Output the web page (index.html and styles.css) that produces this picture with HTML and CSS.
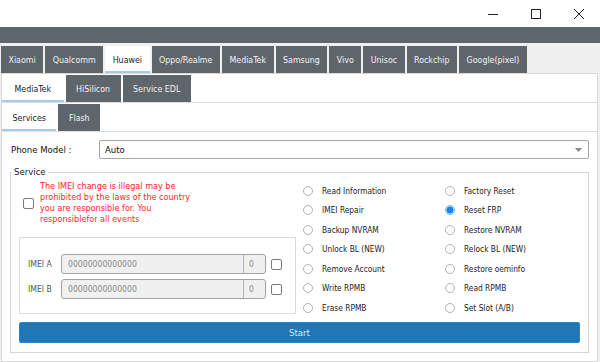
FILE: index.html
```html
<!DOCTYPE html>
<html>
<head>
<meta charset="utf-8">
<link rel="stylesheet" href="styles.css">
</head>
<body>
<div class="window">
  <header class="titlebar">
    <span class="ctl"><svg width="12" height="12" viewBox="0 0 12 12"><path d="M1 6.5H11" stroke="#222" stroke-width="1"/></svg></span>
    <span class="ctl"><svg width="12" height="12" viewBox="0 0 12 12"><rect x="1.5" y="1.5" width="9" height="9" fill="none" stroke="#222" stroke-width="1"/></svg></span>
    <span class="ctl"><svg width="12" height="12" viewBox="0 0 12 12"><path d="M1 1L11 11M11 1L1 11" stroke="#222" stroke-width="1"/></svg></span>
  </header>
  <div class="darkbar"></div>
  <div class="app">
    <nav class="tabs tabs-top">
      <span class="tab">Xiaomi</span>
      <span class="tab">Qualcomm</span>
      <span class="tab active">Huawei</span>
      <span class="tab">Oppo/Realme</span>
      <span class="tab">MediaTek</span>
      <span class="tab">Samsung</span>
      <span class="tab">Vivo</span>
      <span class="tab">Unisoc</span>
      <span class="tab">Rockchip</span>
      <span class="tab">Google(pixel)</span>
    </nav>
    <div class="panel">
      <nav class="tabs tabs-sub">
        <span class="tab active wide">MediaTek</span>
        <span class="tab">HiSilicon</span>
        <span class="tab">Service EDL</span>
      </nav>
      <nav class="tabs tabs-sub">
        <span class="tab active">Services</span>
        <span class="tab">Flash</span>
      </nav>
      <div class="content">
        <div class="model-row">
          <span class="model-label">Phone Model :</span>
          <div class="select">
            <span>Auto</span>
            <svg width="7" height="4" viewBox="0 0 7 4"><path d="M0 0H7L3.5 4Z" fill="#888"/></svg>
          </div>
        </div>
        <fieldset class="group">
          <legend>Service</legend>
          <div class="group-body">
            <div class="left">
              <div class="warning">
                <span class="check"></span>
                <p>The IMEI change is illegal may be<br>prohibited by the laws of the country<br>you are responsible for. You<br>responsiblefor all events</p>
              </div>
              <div class="imei-box">
                <div class="imei-row">
                  <span class="imei-label">IMEI A</span>
                  <div class="imei-input"><span class="num">00000000000000</span><span class="cnt">0</span></div>
                  <span class="check"></span>
                </div>
                <div class="imei-row">
                  <span class="imei-label">IMEI B</span>
                  <div class="imei-input"><span class="num">00000000000000</span><span class="cnt">0</span></div>
                  <span class="check"></span>
                </div>
              </div>
            </div>
            <div class="options">
              <label class="opt"><span class="radio"></span>Read Information</label>
              <label class="opt"><span class="radio"></span>Factory Reset</label>
              <label class="opt"><span class="radio"></span>IMEI Repair</label>
              <label class="opt"><span class="radio on"></span>Reset FRP</label>
              <label class="opt"><span class="radio"></span>Backup NVRAM</label>
              <label class="opt"><span class="radio"></span>Restore NVRAM</label>
              <label class="opt"><span class="radio"></span>Unlock BL (NEW)</label>
              <label class="opt"><span class="radio"></span>Relock BL (NEW)</label>
              <label class="opt"><span class="radio"></span>Remove Account</label>
              <label class="opt"><span class="radio"></span>Restore oeminfo</label>
              <label class="opt"><span class="radio"></span>Write RPMB</label>
              <label class="opt"><span class="radio"></span>Read RPMB</label>
              <label class="opt"><span class="radio"></span>Erase RPMB</label>
              <label class="opt"><span class="radio"></span>Set Slot (A/B)</label>
            </div>
          </div>
          <button class="start">Start</button>
        </fieldset>
      </div>
    </div>
  </div>
</div>
</body>
</html>
```
FILE: styles.css
```css
* { box-sizing: border-box; }
html, body { margin: 0; padding: 0; }
body {
  width: 600px;
  height: 362px;
  overflow: hidden;
  background: #f0f0f0;
  font-family: "DejaVu Sans Condensed", "DejaVu Sans", sans-serif;
  font-stretch: condensed;
  font-size: 9px;
  color: #222;
}
.titlebar {
  height: 27px;
  background: #fff;
  display: flex;
  justify-content: flex-end;
}
.ctl {
  width: 43px;
  display: flex;
  align-items: center;
  justify-content: center;
}
.darkbar { height: 16px; background: #5e666c; }
.app {
  height: 319px;
  padding: 3px 2px 0 1px;
  background: #f0f0f0;
  display: flex;
  flex-direction: column;
}
.tabs { display: flex; gap: 2px; }
.tabs-top { height: 27px; flex: none; }
.tab {
  display: flex;
  align-items: center;
  padding: 0 7.5px;
  background: #5e666c;
  color: #f4f4f4;
  font-size: 8.8px;
  white-space: nowrap;
}
.tab.active {
  background: #fff;
  color: #1a1a1a;
  box-shadow: inset 0 -2px #a9cbea;
}
.panel {
  flex: 1;
  background: #fff;
  border: 1px solid #d9d9d9;
  display: flex;
  flex-direction: column;
}
.tabs-sub {
  height: 29px;
  padding-top: 1px;
  border-bottom: 1px solid #dedede;
  flex: none;
}
.tabs-sub .tab { padding: 0 10.5px; }
.tabs-sub .tab.wide { padding: 0 12.5px; }
.content { padding: 8px 8px 0 8px; }
.model-row { display: flex; align-items: center; height: 19px; }
.model-label { width: 89px; padding-left: 1px; font-size: 9.5px; color: #111; }
.select {
  flex: 1;
  height: 19px;
  border: 1px solid #a6a6a6;
  border-radius: 2px;
  display: flex;
  align-items: center;
  justify-content: space-between;
  padding: 0 6px 0 5px;
  font-size: 9.5px;
  color: #111;
}
.group {
  margin: 7px 0 0 0;
  padding: 0 0 9px 0;
  border: 1px solid #d5d5d5;
  min-width: 0;
}
.group legend {
  margin-left: 1px;
  padding: 0 2px;
  font-size: 9.5px;
  line-height: 12px;
  color: #222;
}
.group-body {
  display: flex;
  align-items: flex-start;
  padding: 3px 0 0 8px;
}
.left { width: 277px; }
.warning {
  display: flex;
  align-items: center;
  padding-left: 4px;
  gap: 6px;
}
.warning p {
  margin: 0;
  color: #ff2626;
  font-size: 9px;
  line-height: 11px;
}
.check {
  width: 11px;
  height: 11px;
  border: 1px solid #7a7a7a;
  border-radius: 2px;
  background: #fff;
  flex: none;
}
.imei-box {
  margin-top: 12px;
  height: 77px;
  border: 1px solid #dcdcdc;
  padding: 16px 0 0 8px;
  display: flex;
  flex-direction: column;
  gap: 5px;
}
.imei-row { display: flex; align-items: center; height: 20px; }
.imei-label { width: 33px; color: #555; font-size: 8.6px; }
.imei-input {
  width: 205px;
  height: 20px;
  border: 1px solid #a2a2a2;
  border-radius: 3px;
  background: #f0f0f0;
  display: flex;
  color: #8a8a8a;
  font-size: 8.6px;
  margin-right: 5px;
}
.imei-input .num { flex: 1; display: flex; align-items: center; padding-left: 6px; }
.imei-input .cnt {
  width: 22px;
  border-left: 1px solid #b4b4b4;
  display: flex;
  align-items: center;
  padding-left: 5px;
}
.options {
  margin-left: 7px;
  display: grid;
  grid-template-columns: 142px 142px;
  grid-auto-rows: 19.5px;
}
.opt {
  display: flex;
  align-items: center;
  gap: 9px;
  font-size: 8.3px;
  color: #222;
  white-space: nowrap;
}
.radio {
  width: 10px;
  height: 10px;
  border: 1px solid #b3b3b3;
  border-radius: 50%;
  background: #fff;
  flex: none;
}
.radio.on {
  border-color: #74b6ef;
  background: radial-gradient(circle, #0f86f2 0 3.2px, #d6eafb 3.8px);
}
.start {
  display: block;
  width: calc(100% - 16px);
  margin: 4.5px 8px 0 8px;
  height: 21px;
  border: 1px solid #2a84c6;
  border-radius: 2px;
  background: #1f77b7;
  color: #dce9f5;
  font-family: inherit;
  font-stretch: condensed;
  font-size: 9.5px;
  padding: 0;
}
```
